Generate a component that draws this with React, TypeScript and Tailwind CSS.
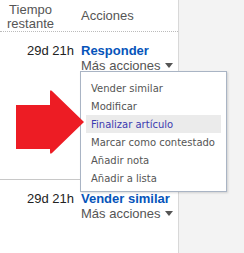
import React from 'react';

const menuItems = [
  'Vender similar',
  'Modificar',
  'Finalizar artículo',
  'Marcar como contestado',
  'Añadir nota',
  'Añadir a lista',
];

const Caret: React.FC = () => (
  <svg width="8" height="5" viewBox="0 0 8 5" className="ml-[5px] inline-block">
    <path d="M0 0h8L4 5z" fill="#555" />
  </svg>
);

const Row: React.FC<{ time: string; action: string; first?: boolean }> = ({ time, action, first }) => (
  <div className={`flex pt-[11px] ${first ? '' : 'border-t border-[#c8c8c8]'}`}>
    <div className="w-[74px] text-right text-[13px] leading-[15px] text-[#222]">{time}</div>
    <div className="pl-[7px] leading-[15px]">
      <div className="text-[13px] font-bold text-[#0654ba]">{action}</div>
      <div className="flex items-center text-[13px] text-[#555]">
        Más acciones
        <Caret />
      </div>
    </div>
  </div>
);

export default function App() {
  return (
    <div className="relative flex h-[253px] w-[244px] overflow-hidden bg-[#f3f3f3] font-['Liberation_Sans',Arial,sans-serif]">
      <div className="w-[179px] shrink-0 border-r border-[#d8d8d8] bg-white">
        <div className="flex h-[32px] border-b border-dotted border-[#bbb] text-[13px] text-[#555]">
          <div className="w-[61px] pt-[3px] text-center leading-[14px]">
            Tiempo
            <br />
            restante
          </div>
          <div className="pl-[20px] pt-[9px] leading-[14px]">Acciones</div>
        </div>
        <div className="h-[147px]">
          <Row time="29d 21h" action="Responder" first />
        </div>
        <Row time="29d 21h" action="Vender similar" />
      </div>

      <div className="absolute left-[80px] top-[71px] w-[147px] border border-[#a9b4c4] bg-white px-[5px] pb-[4px] pt-[7px] shadow-[1px_1px_2px_rgba(0,0,0,0.15)] font-['DejaVu_Sans',Verdana,sans-serif] text-[10px]">
        {menuItems.map((item, i) => (
          <div
            key={item}
            className={`flex h-[18px] items-center pl-[5px] whitespace-nowrap ${
              i === 2 ? 'bg-[#ebebeb] text-[#3b3bb0]' : 'text-[#555]'
            }`}
          >
            {item}
          </div>
        ))}
      </div>

      <svg className="absolute left-0 top-0" width="244" height="253" viewBox="0 0 244 253">
        <path
          d="M16 105H50V92Q50 89 52 91L84 122L52 153Q50 155 50 152V149H16Z"
          fill="#ed1c24"
        />
      </svg>
    </div>
  );
}
